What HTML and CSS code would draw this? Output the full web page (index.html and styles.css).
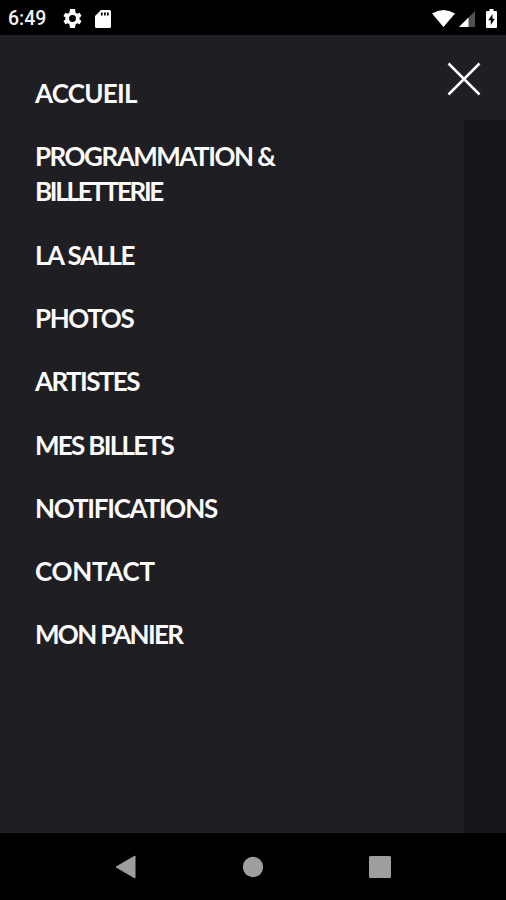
FILE: index.html
```html
<!DOCTYPE html>
<html lang="fr">
<head>
<meta charset="utf-8">
<meta name="viewport" content="width=device-width, initial-scale=1">
<title>Menu</title>
<link rel="stylesheet" href="styles.css">
</head>
<body>
<div class="screen">
  <header class="status">
    <span class="time">6:49</span>
    <svg class="gear" viewBox="2 2 20 20"><path fill="#fff" fill-rule="evenodd" d="M19.400 13a7.500 7.500 0 0 0 0-2l2.100-1.600-2-3.500-2.500 1a7.500 7.500 0 0 0-1.700-1L14.600 2H9.400L8.700 5.900a7.500 7.500 0 0 0-1.700 1l-2.500-1-2 3.500L4.600 11a7.500 7.500 0 0 0 0 2L2.500 14.600l2 3.500 2.500-1a7.500 7.500 0 0 0 1.700 1l.7 3.900h5.200l.7-3.900a7.500 7.500 0 0 0 1.700-1l2.500 1 2-3.500zM12 15.600a3.600 3.600 0 1 1 0-7.200 3.600 3.600 0 0 1 0 7.200z"/></svg>
    <svg class="sdcard" viewBox="0 0 16 18"><path fill="#fff" fill-rule="evenodd" d="M6 0h8.500A1.500 1.500 0 0 1 16 1.500v15a1.500 1.500 0 0 1-1.500 1.500h-13A1.500 1.500 0 0 1 0 16.500V6zM6 2.500v3h1.700v-3zm3 0v3h1.700v-3zm3 0v3h1.700v-3z"/></svg>
    <div class="indicators">
      <svg class="wifi" viewBox="0 0 23 17"><path fill="#fff" d="M0 3.500Q11.500-3.500 23 3.500L11.500 17z"/></svg>
      <svg class="signal" viewBox="0 0 16 16"><path fill="#515151" d="M16 0v16H0z"/><path fill="#fff" d="M9.500 6.500V16H0z"/></svg>
      <svg class="battery" viewBox="0 0 11 19"><path fill="#fff" d="M3.500 0h4v2H10a1 1 0 0 1 1 1v15a1 1 0 0 1-1 1H1a1 1 0 0 1-1-1V3a1 1 0 0 1 1-1h2.500z"/><path fill="#000" d="M6.500 5L2.300 11.200h2.500V16l4-6.300H6.500z"/></svg>
    </div>
  </header>
  <main class="body">
    <nav class="menu">
      <a class="item accueil">ACCUEIL</a>
      <a class="item"><span class="programmation">PROGRAMMATION &amp;</span><br><span class="billetterie">BILLETTERIE</span></a>
      <a class="item salle">LA SALLE</a>
      <a class="item photos">PHOTOS</a>
      <a class="item artistes">ARTISTES</a>
      <a class="item billets">MES BILLETS</a>
      <a class="item notifications">NOTIFICATIONS</a>
      <a class="item contact">CONTACT</a>
      <a class="item panier">MON PANIER</a>
    </nav>
    <div class="side">
      <svg class="close" viewBox="0 0 34 34"><path d="M1.500 1.500l31 31M32.500 1.500l-31 31" stroke="#fff" stroke-width="2.500"/></svg>
      <div class="shade"></div>
    </div>
  </main>
  <footer class="navbar">
    <div><svg class="nav-icon" viewBox="0 0 24 24"><path fill="#9e9e9e" stroke="#9e9e9e" stroke-linejoin="round" d="M21 1v22L2 12z"/></svg></div>
    <div><svg class="nav-icon" viewBox="0 0 24 24"><circle cx="12" cy="12" r="10.200" fill="#9e9e9e"/></svg></div>
    <div><svg class="nav-icon" viewBox="0 0 24 24"><rect x="1" y="1" width="22" height="22" rx="1.500" fill="#9e9e9e"/></svg></div>
  </footer>
</div>
</body>
</html>
```
FILE: styles.css
```css
* { box-sizing: border-box; }
body { margin: 0; background: #000; }
svg { display: block; flex: none; }
.screen { width: 506px; height: 900px; display: flex; flex-direction: column; overflow: hidden; background: #1f1e22; }
.status { height: 35px; flex: none; background: #000; display: flex; align-items: center; padding: 2px 9px 0 8px; }
.time { width: 55px; font: 500 19.500px/24px Roboto, sans-serif; color: #f2f2f2; }
.gear { width: 19px; height: 19px; }
.sdcard { width: 16px; height: 18px; margin-left: 13px; }
.indicators { display: flex; align-items: center; margin-left: auto; }
.wifi { width: 23px; height: 17px; }
.signal { width: 16px; height: 16px; margin-left: 4px; }
.battery { width: 11px; height: 19px; margin-left: 11px; }
.body { flex: 1; display: flex; justify-content: space-between; }
.menu { display: flex; flex-direction: column; gap: 28.200px; padding: 41px 0 0 35px; }
.item { display: block; width: 280px; font: 700 26px/35.100px Lato, sans-serif; color: #fafafa; white-space: nowrap; }
.accueil { letter-spacing: -0.75px; }
.programmation { letter-spacing: -1.5px; }
.billetterie { letter-spacing: -2.300px; }
.salle { letter-spacing: -1.5px; }
.photos { letter-spacing: -1.400px; }
.artistes { letter-spacing: -1.600px; }
.billets { letter-spacing: -1.700px; }
.notifications { letter-spacing: -1.250px; }
.contact { letter-spacing: -0.300px; }
.panier { letter-spacing: -1.700px; }
.side { width: 60px; display: flex; flex-direction: column; align-items: flex-end; }
.close { width: 34px; height: 34px; margin: 27px 25px 24px 0; }
.shade { width: 42px; flex: 1; background: #16151a; }
.navbar { height: 67px; flex: none; background: #000; display: grid; grid-template-columns: repeat(3, 127px); justify-content: center; align-items: center; justify-items: center; }
.nav-icon { width: 24px; height: 24px; }
```
